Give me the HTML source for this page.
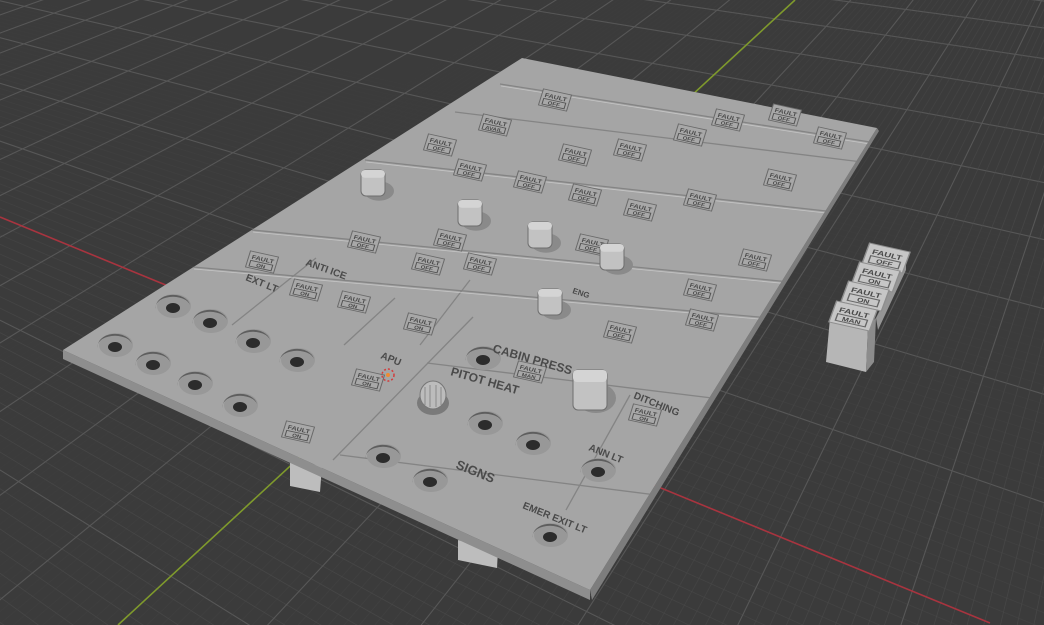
<!DOCTYPE html>
<html><head><meta charset="utf-8">
<style>
html,body{margin:0;padding:0;background:#3b3b3b;overflow:hidden;width:1044px;height:625px}
svg{display:block;position:absolute;left:0;top:0}
text{font-family:"Liberation Sans",sans-serif;fill:#4a4a4a;font-weight:bold}
</style></head>
<body>
<svg id="s" width="1044" height="625" viewBox="0 0 1044 625" xmlns="http://www.w3.org/2000/svg">
<defs><clipPath id="pc"><polygon points="522,58 877,128 590,590 63,350"/></clipPath></defs>
<rect width="1044" height="625" fill="#3b3b3b"/>
<g id="grid"></g>
<line x1="0" y1="217" x2="990" y2="623" stroke="#a8343f" stroke-width="1.6"/>
<line x1="118" y1="625" x2="795" y2="0" stroke="#7f9a2c" stroke-width="1.6"/>

<!-- supports -->
<polygon points="290,460 322,466 320,492 290,486" fill="#bdbdbd"/>
<polygon points="458,540 498,550 497,568 458,560" fill="#bdbdbd"/>

<!-- cube stack -->
<g>
<polygon points="830,318 868,326 866,372 826,362" fill="#b6b6b6"/>
<polygon points="868,326 876,318 874,362 866,372" fill="#8c8c8c"/>
<polygon points="876,318 906,258 906,270 878,330" fill="#959595"/>
<g id="cubes"></g>
</g>

<!-- panel thickness -->
<polygon points="63,350 590,590 590,600 63,359" fill="#8e8e8e"/>
<polygon points="590,590 877,128 879,131 592,600" fill="#7d7d7d"/>
<!-- panel top -->
<polygon points="522,58 877,128 590,590 63,350" fill="#a5a5a5"/>

<g clip-path="url(#pc)">
<g stroke="#848484" stroke-width="1.3" fill="none">
<line x1="500" y1="84" x2="870" y2="142"/>
<line x1="455" y1="112" x2="862" y2="162"/>
<line x1="365" y1="160" x2="835" y2="212"/>
<line x1="252" y1="230" x2="790" y2="282"/>
<line x1="193" y1="267" x2="770" y2="318"/>
<line x1="427" y1="363" x2="712" y2="398"/>
<line x1="340" y1="455" x2="680" y2="498"/>
<line x1="473" y1="317" x2="333" y2="460"/>
<line x1="470" y1="280" x2="420" y2="345"/>
<line x1="316" y1="258" x2="232" y2="325"/>
<line x1="395" y1="298" x2="344" y2="345"/>
<line x1="630" y1="395" x2="566" y2="510"/>
</g>
<g stroke="#dcdcdc" stroke-width="0.8" fill="none" opacity="0.6">
<line x1="501" y1="86" x2="870" y2="144"/>
<line x1="366" y1="162" x2="835" y2="214"/>
<line x1="253" y1="232" x2="790" y2="284"/>
<line x1="194" y1="269" x2="770" y2="320"/>
</g>
</g>

<g id="holes"></g>
<g id="ann"></g>
<g id="knobs"></g>
<g transform="translate(433,395)">
<ellipse cx="0" cy="8" rx="16" ry="12" fill="#7a7a7a"/>
<ellipse cx="0" cy="0" rx="13" ry="14" fill="#bcbcbc" stroke="#777"/>
<g stroke="#8a8a8a"><line x1="-8" y1="-8" x2="-8" y2="10"/><line x1="-3" y1="-10" x2="-3" y2="12"/><line x1="3" y1="-10" x2="3" y2="12"/><line x1="8" y1="-8" x2="8" y2="10"/></g>
</g>

<g font-size="10">
<text transform="translate(492,352) rotate(16)" font-size="12">CABIN PRESS</text>
<text transform="translate(450,375) rotate(16)" font-size="12">PITOT HEAT</text>
<text transform="translate(455,468) rotate(22)" font-size="13">SIGNS</text>
<text transform="translate(588,450) rotate(22)">ANN LT</text>
<text transform="translate(522,508) rotate(22)">EMER EXIT LT</text>
<text transform="translate(633,398) rotate(22)">DITCHING</text>
<text transform="translate(380,358) rotate(22)">APU</text>
<text transform="translate(305,265) rotate(20)">ANTI ICE</text>
<text transform="translate(245,280) rotate(22)">EXT LT</text>
<text transform="translate(572,293) rotate(18)" font-size="8">ENG</text>
</g>

<circle cx="388" cy="375" r="6" fill="none" stroke="#d23c3c" stroke-dasharray="2,2" stroke-width="1.5"/>
<circle cx="388" cy="375" r="2" fill="#f08a30"/>
</svg>
<script>
(function(){
var NS="http://www.w3.org/2000/svg";
function el(n,a,p){var e=document.createElementNS(NS,n);for(var k in a)e.setAttribute(k,a[k]);p.appendChild(e);return e;}
var O=[386,375],VA=[-1193,-272],VB=[1250,-428],kA=200,kB=100;
var LA=Math.hypot(VA[0]-O[0],VA[1]-O[1]),LB=Math.hypot(VB[0]-O[0],VB[1]-O[1]);
function P(V,k,u){var t=u/(u+k);return [O[0]+(V[0]-O[0])*t,O[1]+(V[1]-O[1])*t];}
var g=document.getElementById('grid');
function fam(V,Vo,k,L,lo,hi){
 for(var u=lo;u<=hi;u++){
  if(u===0)continue;
  var p=P(V,k,u);var s=L*k/((u+k)*(u+k));
  var major=(u%10===0);
  var a=major?Math.min(1,s/1.5):Math.max(0,Math.min(1,(s-5)/10))*0.7;
  if(a<=0.02)continue;
  var e=[Vo[0]+(p[0]-Vo[0])*6,Vo[1]+(p[1]-Vo[1])*6];
  el('line',{x1:Vo[0],y1:Vo[1],x2:e[0],y2:e[1],stroke:major?'#575757':'#4b4b4b','stroke-width':major?1.1:0.8,opacity:a},g);
 }
}
fam(VB,VA,kB,LB,-95,1200);
fam(VA,VB,kA,LA,-195,2000);
var h=document.getElementById('holes');
[[173,308],[210,323],[253,343],[297,362],[115,347],[153,365],[195,385],[240,407],[485,425],[533,445],[598,472],[483,360],[430,482],[383,458],[550,537]].forEach(function(c){
 el('ellipse',{cx:c[0]+1,cy:c[1]-2,rx:17,ry:12,fill:'#989898'},h);
 el('path',{d:'M'+(c[0]-17)+','+(c[1]+1)+' A17,12 0 0 1 '+(c[0]+17)+','+(c[1]-3)+' A17,10 0 0 0 '+(c[0]-17)+','+(c[1]+1)+'Z',fill:'#5e5e5e'},h);
 el('ellipse',{cx:c[0],cy:c[1],rx:7,ry:5,fill:'#2c2c2c'},h);
});
function box(par,x,y,word,sc){
 var gg=el('g',{transform:'matrix('+sc+','+(0.22*sc)+','+(-0.25*sc)+','+(0.8*sc)+','+x+','+y+')'},par);
 el('rect',{x:-14,y:-10,width:28,height:20,fill:'#a8a8a8',stroke:'#6a6a6a','stroke-width':1},gg);
 el('rect',{x:-11,y:1,width:22,height:7,fill:'none',stroke:'#555','stroke-width':1},gg);
 var t=el('text',{x:0,y:-1,'font-size':7,'text-anchor':'middle'},gg);t.textContent='FAULT';
 var t2=el('text',{x:0,y:7,'font-size':6,'text-anchor':'middle'},gg);t2.textContent=word;
}
var an=document.getElementById('ann');
var boxes=[[262,262,'ON'],[306,290,'ON'],[354,302,'ON'],[420,324,'ON'],[368,380,'ON'],[298,432,'ON'],[530,372,'MAN'],[645,415,'ON'],[620,332,'OFF'],[700,290,'OFF'],[702,320,'OFF'],[364,242,'OFF'],[428,264,'OFF'],[480,264,'OFF'],[592,245,'OFF'],[530,182,'OFF'],[585,195,'OFF'],[640,210,'OFF'],[700,200,'OFF'],[755,260,'OFF'],[780,180,'OFF'],[470,170,'OFF'],[440,145,'OFF'],[495,125,'AVAIL'],[555,100,'OFF'],[630,150,'OFF'],[690,135,'OFF'],[728,120,'OFF'],[830,138,'OFF'],[785,115,'OFF'],[450,240,'OFF'],[575,155,'OFF']];
boxes.forEach(function(b){box(an,b[0],b[1],b[2],1);});
var cu=document.getElementById('cubes');
[[886,258,'OFF'],[876,277,'ON'],[865,296,'ON'],[853,316,'MAN']].forEach(function(b){
 var gg=el('g',{transform:'matrix(1.35,0.3,-0.35,0.95,'+b[0]+','+b[1]+')'},cu);
 el('rect',{x:-15,y:-11,width:30,height:22,fill:'#c6c6c6',stroke:'#8e8e8e','stroke-width':1},gg);
 el('rect',{x:-11,y:1,width:22,height:7,fill:'none',stroke:'#666','stroke-width':1},gg);
 var t=el('text',{x:0,y:-1,'font-size':7,'text-anchor':'middle'},gg);t.textContent='FAULT';
 var t2=el('text',{x:0,y:7,'font-size':6,'text-anchor':'middle'},gg);t2.textContent=b[2];
});
var kn=document.getElementById('knobs');
[[373,183],[470,213],[540,235],[612,257],[550,302],[590,390]].forEach(function(c){
 var big=c[0]===590;var w=big?17:12,hh=big?20:13;
 el('ellipse',{cx:c[0]+6,cy:c[1]+8,rx:w+3,ry:hh*0.75,fill:'#8a8a8a'},kn);
 el('rect',{x:c[0]-w,y:c[1]-hh,width:w*2,height:hh*2,rx:5,fill:'#c2c2c2',stroke:'#6e6e6e'},kn);
 el('rect',{x:c[0]-w,y:c[1]-hh,width:w*2,height:hh*0.6,rx:4,fill:'#d4d4d4'},kn);
});
})();
</script>
</body></html>
